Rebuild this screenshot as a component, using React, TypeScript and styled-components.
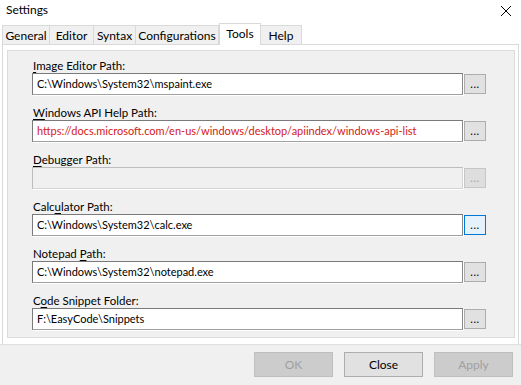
import styled, { createGlobalStyle } from 'styled-components';

const GlobalStyle = createGlobalStyle`
    body {
        margin: 0;
        font-family: Lato, "Noto Sans", sans-serif;
        font-size: 12px;
        color: #000000;
    }
`;

interface FieldData {
    label: string;
    key: number;
    value: string;
    link?: boolean;
    disabled?: boolean;
    focused?: boolean;
}

const tabs = ['General', 'Editor', 'Syntax', 'Configurations', 'Tools', 'Help'];
const tabWidths = [48, 44, 42, 83, 42, 41];

const fields: FieldData[] = [
    { label: 'Image Editor Path:', key: 0, value: 'C:\\Windows\\System32\\mspaint.exe' },
    { label: 'Windows API Help Path:', key: 0, value: 'https://docs.microsoft.com/en-us/windows/desktop/apiindex/windows-api-list', link: true },
    { label: 'Debugger Path:', key: 0, value: '', disabled: true },
    { label: 'Calculator Path:', key: 4, value: 'C:\\Windows\\System32\\calc.exe', focused: true },
    { label: 'Notepad Path:', key: 8, value: 'C:\\Windows\\System32\\notepad.exe' },
    { label: 'Code Snippet Folder:', key: 1, value: 'F:\\EasyCode\\Snippets' },
];

const AccessLabel = ({ text, index }: { text: string; index: number }) => (
    <>
        {text.slice(0, index)}
        <u>{text[index]}</u>
        {text.slice(index + 1)}
    </>
);

const App = () => {
    return (
        <Window>
            <GlobalStyle />
            <TitleBar>
                <span>Settings</span>
                <CloseIcon width="12" height="12" viewBox="0 0 12 12">
                    <path d="M1 1 L11 11 M11 1 L1 11" stroke="#000" strokeWidth="1" />
                </CloseIcon>
            </TitleBar>
            <TabStrip>
                {tabs.map((t, i) => (
                    <Tab key={t} $active={t === 'Tools'} $width={tabWidths[i]}>{t}</Tab>
                ))}
            </TabStrip>
            <TabPage>
                <Panel>
                    {fields.map(f => (
                        <Field key={f.label}>
                            <Label><AccessLabel text={f.label} index={f.key} /></Label>
                            <InputRow>
                                <TextBox $disabled={f.disabled} $link={f.link}>{f.value}</TextBox>
                                <BrowseButton $disabled={f.disabled} $focused={f.focused}>...</BrowseButton>
                            </InputRow>
                        </Field>
                    ))}
                </Panel>
            </TabPage>
            <Footer>
                <DialogButton $disabled>OK</DialogButton>
                <DialogButton>Close</DialogButton>
                <DialogButton $disabled>Apply</DialogButton>
            </Footer>
        </Window>
    );
};

export default App;

const Window = styled.div`
    width: 521px;
    height: 385px;
    background: #ffffff;
    display: flex;
    flex-direction: column;
    overflow: hidden;
`;

const TitleBar = styled.div`
    height: 22px;
    display: flex;
    align-items: center;
    justify-content: space-between;
    padding: 0 9px 3px 6px;
    box-sizing: border-box;
    font-size: 12px;
`;

const CloseIcon = styled.svg`
    display: block;
    margin-top: 2px;
`;

const TabStrip = styled.div`
    height: 22px;
    display: flex;
    align-items: flex-end;
    padding-left: 2px;
`;

const Tab = styled.div<{ $active?: boolean; $width: number }>`
    box-sizing: border-box;
    width: ${p => p.$width}px;
    height: ${p => (p.$active ? 22 : 19)}px;
    border: 1px solid #d9d9d9;
    border-bottom: none;
    border-left: ${p => (p.$active ? '1px solid #d9d9d9' : 'none')};
    background: ${p => (p.$active ? '#ffffff' : '#f0f0f0')};
    display: flex;
    align-items: ${p => (p.$active ? 'flex-start' : 'center')};
    padding-top: ${p => (p.$active ? '2px' : '0')};
    justify-content: center;
    font-size: 12px;
    margin-bottom: ${p => (p.$active ? '-1px' : '0')};
    position: relative;
    z-index: ${p => (p.$active ? 1 : 0)};

    &:first-child {
        border-left: 1px solid #d9d9d9;
    }
`;

const TabPage = styled.div`
    height: 300px;
    box-sizing: border-box;
    margin: 0 2px;
    border: 1px solid #d9d9d9;
    border-bottom: none;
    background: #ffffff;
    padding: 5px 3px 6px 4px;
`;

const Panel = styled.div`
    box-sizing: border-box;
    height: 288px;
    background: #f0f0f0;
    border: 1px solid #dcdcdc;
    padding: 7px 0 0 24px;
    display: flex;
    flex-direction: column;
    gap: 10px;
`;

const Field = styled.div`
    display: flex;
    flex-direction: column;
`;

const Label = styled.div`
    height: 15px;
    line-height: 15px;
    padding-left: 1px;
    font-size: 11.5px;
    white-space: nowrap;

    u {
        text-underline-offset: 2px;
    }
`;

const InputRow = styled.div`
    display: flex;
    align-items: flex-start;
    gap: 1px;
`;

const TextBox = styled.div<{ $disabled?: boolean; $link?: boolean }>`
    box-sizing: border-box;
    width: 431px;
    height: 22px;
    border: 1px solid ${p => (p.$disabled ? '#bcbcbc' : '#7a7a7a')};
    border-right-color: ${p => (p.$disabled ? '#d4d4d4' : '#8a8a8a')};
    border-bottom-color: ${p => (p.$disabled ? '#d4d4d4' : '#a0a0a0')};
    box-shadow: 1px 1px 0 #ffffff;
    background: ${p => (p.$disabled ? '#f0f0f0' : '#ffffff')};
    color: ${p => (p.$link ? '#d42020' : '#000000')};
    padding: 0 4px;
    line-height: 20px;
    font-size: 11px;
    white-space: nowrap;
    overflow: hidden;
`;

const BrowseButton = styled.div<{ $disabled?: boolean; $focused?: boolean }>`
    box-sizing: border-box;
    width: 22px;
    height: 20px;
    margin-top: 1px;
    border: 1px solid ${p => (p.$focused ? '#0078d7' : p.$disabled ? '#c6c6c6' : '#adadad')};
    background: ${p => (p.$focused ? '#e5f1fb' : p.$disabled ? '#dedede' : '#e1e1e1')};
    color: ${p => (p.$disabled ? '#a0a0a0' : '#000000')};
    display: flex;
    align-items: center;
    justify-content: center;
    font-size: 11px;
    letter-spacing: 0.5px;
    padding-bottom: 2px;
`;

const Footer = styled.div`
    flex: 1;
    background: #f0f0f0;
    border-top: 1px solid #dfdfdf;
    display: flex;
    justify-content: flex-end;
    align-items: flex-start;
    gap: 11px;
    padding: 7px 8px 0 0;
`;

const DialogButton = styled.div<{ $disabled?: boolean }>`
    box-sizing: border-box;
    width: 79px;
    height: 25px;
    border: 1px solid ${p => (p.$disabled ? '#bfbfbf' : '#adadad')};
    background: ${p => (p.$disabled ? '#cccccc' : '#e1e1e1')};
    color: ${p => (p.$disabled ? '#a0a0a0' : '#000000')};
    display: flex;
    align-items: center;
    justify-content: center;
    font-size: 12px;
`;
